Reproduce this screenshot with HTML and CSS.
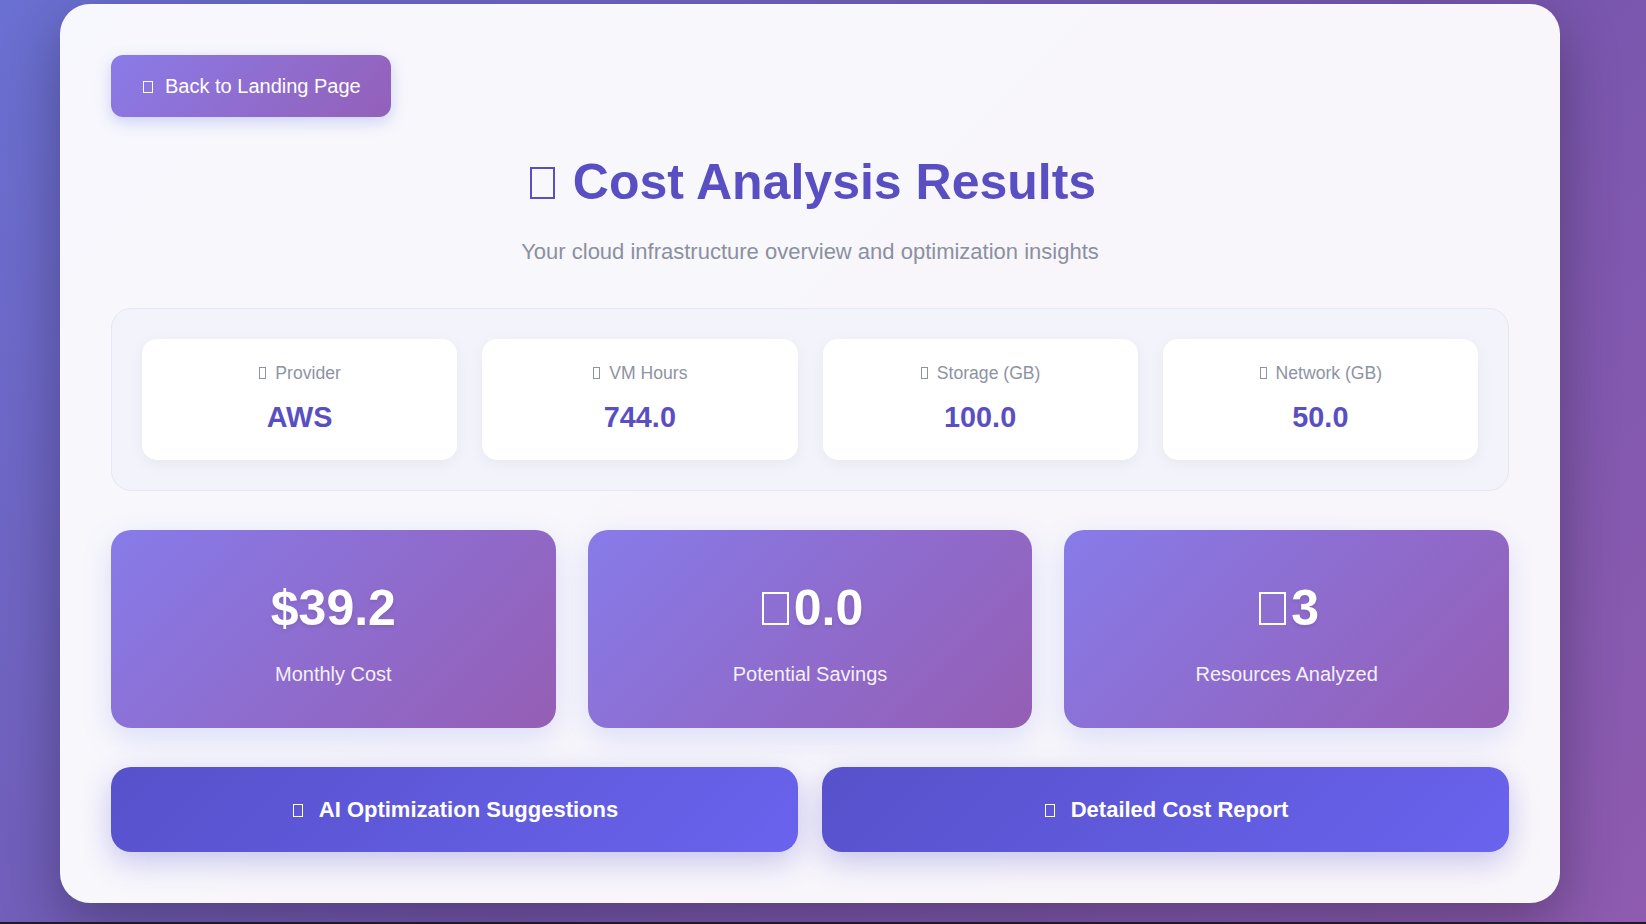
FILE: index.html
```html
<!DOCTYPE html>
<html lang="en">
<head>
<meta charset="utf-8">
<title>Cost Analysis Results</title>
<link rel="stylesheet" href="styles.css">
</head>
<body>
<main class="panel">
  <a class="back-btn" href="#"><span class="tofu tofu-btn" aria-hidden="true"></span>Back to Landing Page</a>

  <header class="hero">
    <h1><span class="tofu tofu-title" aria-hidden="true"></span>Cost Analysis Results</h1>
    <p class="subtitle">Your cloud infrastructure overview and optimization insights</p>
  </header>

  <section class="summary">
    <div class="info-card">
      <div class="info-label"><span class="tofu tofu-label" aria-hidden="true"></span>Provider</div>
      <div class="info-value">AWS</div>
    </div>
    <div class="info-card">
      <div class="info-label"><span class="tofu tofu-label" aria-hidden="true"></span>VM Hours</div>
      <div class="info-value">744.0</div>
    </div>
    <div class="info-card">
      <div class="info-label"><span class="tofu tofu-label" aria-hidden="true"></span>Storage (GB)</div>
      <div class="info-value">100.0</div>
    </div>
    <div class="info-card">
      <div class="info-label"><span class="tofu tofu-label" aria-hidden="true"></span>Network (GB)</div>
      <div class="info-value">50.0</div>
    </div>
  </section>

  <section class="stats">
    <div class="stat">
      <div class="stat-value">$39.2</div>
      <div class="stat-label">Monthly Cost</div>
    </div>
    <div class="stat">
      <div class="stat-value"><span class="tofu tofu-stat" aria-hidden="true"></span>0.0</div>
      <div class="stat-label">Potential Savings</div>
    </div>
    <div class="stat">
      <div class="stat-value"><span class="tofu tofu-stat" aria-hidden="true"></span>3</div>
      <div class="stat-label">Resources Analyzed</div>
    </div>
  </section>

  <section class="actions">
    <button class="action" type="button"><span class="tofu tofu-action" aria-hidden="true"></span>AI Optimization Suggestions</button>
    <button class="action" type="button"><span class="tofu tofu-action" aria-hidden="true"></span>Detailed Cost Report</button>
  </section>
</main>
</body>
</html>
```

FILE: styles.css
```css
* {
  box-sizing: border-box;
}

html {
  background: #1d1b24;
}

body {
  margin: 0;
  height: 922px;
  padding: 4px 0 0 60px;
  overflow: hidden;
  background: linear-gradient(135deg, #6a70d2 0%, #7656ae 55%, #8e5bb0 100%);
  font-family: "Liberation Sans", Arial, sans-serif;
  line-height: 1.6;
}

.panel {
  width: 1500px;
  padding: 50px;
  background: rgba(255, 255, 255, 0.95);
  border: 1px solid rgba(255, 255, 255, 0.2);
  border-radius: 30px;
  box-shadow: 0 20px 60px rgba(0, 0, 0, 0.3);
}

/* missing-glyph boxes, as the emoji icons render without an emoji font */
.tofu {
  display: inline-block;
  vertical-align: baseline;
  border: 1px solid currentColor;
}

.tofu-btn {
  width: 10px;
  height: 12px;
  margin: 0 12px 0 2px;
}

.tofu-title {
  width: 25px;
  height: 32px;
  margin: 0 18px 0 6px;
  border-width: 2px;
}

.tofu-label {
  width: 7px;
  height: 12px;
  margin: 0 9px 0 1px;
}

.tofu-stat {
  width: 27px;
  height: 33px;
  margin: 0 5px;
  border-width: 2px;
}

.tofu-action {
  width: 10px;
  height: 13px;
  margin: 0 16px 0 2px;
}

.back-btn {
  display: inline-block;
  margin-bottom: 25px;
  padding: 15px 30px;
  border-radius: 12px;
  background: linear-gradient(135deg, #8a7be8 0%, #9460b8 100%);
  color: #fff;
  font-size: 20px;
  text-decoration: none;
  box-shadow: 0 5px 15px rgba(102, 126, 234, 0.3);
}

.hero {
  text-align: center;
  margin-bottom: 39px;
}

.hero h1 {
  margin: 0 0 12px;
  font-size: 50px;
  line-height: 1.6;
  font-weight: 700;
  color: #594fc3;
}

.subtitle {
  margin: 0;
  font-size: 22px;
  color: #8b90a0;
}

.summary {
  display: grid;
  grid-template-columns: repeat(4, 1fr);
  gap: 25px;
  margin-bottom: 39px;
  padding: 30px;
  border: 1px solid #e6e7f5;
  border-radius: 20px;
  background: #f3f3fc;
}

.info-card {
  padding: 20px;
  border-radius: 15px;
  background: #fff;
  text-align: center;
  box-shadow: 0 4px 15px rgba(0, 0, 0, 0.05);
}

.info-label {
  margin-bottom: 7px;
  font-size: 17.6px;
  color: #8d93a3;
}

.info-value {
  font-size: 28.8px;
  font-weight: 700;
  color: #594fc3;
}

.stats {
  display: grid;
  grid-template-columns: repeat(3, 1fr);
  gap: 32px;
  margin-bottom: 38.5px;
}

.stat {
  padding: 38px 20px;
  border-radius: 20px;
  background: linear-gradient(135deg, #877be9 0%, #955eb4 100%);
  color: #fff;
  text-align: center;
  box-shadow: 0 10px 30px rgba(102, 126, 234, 0.2);
}

.stat-value {
  margin-bottom: 10px;
  font-size: 50px;
  font-weight: 700;
  text-shadow: 0 2px 4px rgba(0, 0, 0, 0.1);
}

.stat-label {
  font-size: 20px;
  opacity: 0.9;
}

.actions {
  display: grid;
  grid-template-columns: 1fr 1fr;
  gap: 24px;
}

.action {
  padding: 25px;
  border: 0;
  border-radius: 20px;
  background: linear-gradient(135deg, #5751cb 0%, #6963ee 100%);
  color: #fff;
  font-family: inherit;
  font-size: 22px;
  font-weight: 700;
  line-height: 1.6;
  box-shadow: 0 10px 30px rgba(87, 81, 203, 0.3);
  cursor: pointer;
}
```
